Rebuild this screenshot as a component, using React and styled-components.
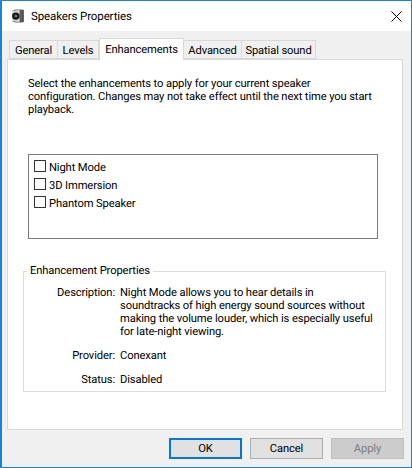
import styled, { createGlobalStyle } from "styled-components";

const Global = createGlobalStyle`
  html, body { margin: 0; padding: 0; background: #f0f0f0; }
  * { box-sizing: border-box; }
`;

const Window = styled.div`
  width: 412px;
  height: 468px;
  display: flex;
  flex-direction: column;
  background: #f0f0f0;
  border: 1px solid #1883d7;
  border-left-width: 2px;
  font-family: Roboto, "Noto Sans", sans-serif;
  font-size: 11.2px;
  letter-spacing: -0.12px;
  text-rendering: geometricPrecision;
  color: #000;
  overflow: hidden;
`;
const TitleBar = styled.div`
  height: 30px;
  flex: none;
  display: flex;
  align-items: center;
  background: #fff;
  padding-left: 9px;
  gap: 6px;
`;
const Title = styled.span`
  flex: 1;
  font-size: 11.5px;
`;
const CloseButton = styled.div`
  width: 30px;
  height: 30px;
  display: flex;
  align-items: center;
  justify-content: center;
`;
const Body = styled.div`
  flex: 1;
  display: flex;
  flex-direction: column;
  padding: 7px 8px 8px 5px;
`;
const TabRow = styled.div`
  height: 21px;
  flex: none;
  display: flex;
  align-items: flex-end;
  padding-left: 2px;
  position: relative;
  z-index: 1;
`;
const Tab = styled.div`
  width: ${(p) => p.$w}px;
  height: ${(p) => (p.$active ? 22 : 19)}px;
  margin-bottom: ${(p) => (p.$active ? -1 : 0)}px;
  display: flex;
  align-items: center;
  justify-content: center;
  background: ${(p) => (p.$active ? "#fff" : "#f0f0f0")};
  border: 1px solid #d9d9d9;
  border-bottom: ${(p) => (p.$active ? "none" : "1px solid #d9d9d9")};
  border-left: ${(p) => (p.$first || p.$active ? "1px solid #d9d9d9" : "none")};
  padding-top: ${(p) => (p.$active ? 0 : 2)}px;
  padding-bottom: ${(p) => (p.$active ? 1 : 0)}px;
`;
const Panel = styled.div`
  height: 371px;
  flex: none;
  background: #fff;
  border: 1px solid #d9d9d9;
  padding: 17px 17px 0 15px;
`;
const Intro = styled.p`
  margin: 0 0 0 5px;
  width: 350px;
  line-height: 13px;
`;
const ListBox = styled.div`
  margin: 38px 0 0 5px;
  width: 350px;
  height: 85px;
  border: 1px solid #7a7a7a;
  padding: 5px 5px;
  display: flex;
  flex-direction: column;
  gap: 6px;
`;
const CheckRow = styled.label`
  display: flex;
  align-items: center;
  gap: 3px;
  height: 12px;
  color: #000;
`;
const CheckText = styled.span`
  padding-top: 3px;
  line-height: 14px;
`;
const CheckBox = styled.span`
  width: 12px;
  height: 12px;
  flex: none;
  background: #fff;
  border: 1px solid #333;
`;
const GroupBox = styled.fieldset`
  margin: 25px 0 0 0;
  padding: 0;
  width: 363px;
  height: 128px;
  border: 1px solid #dcdcdc;
  display: flex;
  flex-direction: column;
  min-width: 0;
`;
const Legend = styled.legend`
  margin-left: 3px;
  padding: 0 3px;
  line-height: 14px;
`;
const PropRow = styled.div`
  display: grid;
  grid-template-columns: 91px 1fr;
  column-gap: 5px;
  margin-top: ${(p) => p.$gap}px;
  line-height: 13px;
`;
const PropLabel = styled.div`
  text-align: right;
`;
const PropValue = styled.div`
  width: 255px;
`;
const Footer = styled.div`
  display: flex;
  justify-content: flex-end;
  gap: 8px;
  margin-top: 8px;
  margin-right: -1px;
`;
const DialogButton = styled.div`
  width: 73px;
  height: 21px;
  display: flex;
  align-items: center;
  justify-content: center;
  background: ${(p) => (p.$disabled ? "#cccccc" : "#e1e1e1")};
  color: ${(p) => (p.$disabled ? "#7f7f7f" : "#000")};
  border: ${(p) => (p.$primary ? "2px solid #0078d7" : p.$disabled ? "1px solid #bfbfbf" : "1px solid #adadad")};
`;

const SpeakerIcon = () => (
  <svg width="14" height="15" viewBox="1 1.5 14 15">
    <path d="M2 3.5 L5 2 H13 L14 3 V14 L13 15 H5 L2 13.5 Z" fill="#6f6f6f" />
    <path d="M2 3.5 L9.5 2.5 V14.5 L2 13.5 Z" fill="#d8d8d8" />
    <circle cx="5.8" cy="8.6" r="3.7" fill="#111" />
    <circle cx="5.8" cy="8.6" r="1.5" fill="#777" />
    <path d="M10 2.5 H13.5 V14.5 H10 Z" fill="#585858" />
  </svg>
);

const CloseIcon = () => (
  <svg width="11" height="11" viewBox="0 0 11 11">
    <path d="M0.5 0.5 L10.5 10.5 M10.5 0.5 L0.5 10.5" stroke="#000" strokeWidth="1" fill="none" />
  </svg>
);

const tabs = [
  { name: "General", w: 49, first: true },
  { name: "Levels", w: 41 },
  { name: "Enhancements", w: 85, active: true },
  { name: "Advanced", w: 58 },
  { name: "Spatial sound", w: 74 },
];

const effects = ["Night Mode", "3D Immersion", "Phantom Speaker"];

const App = () => {
  return (
    <Window>
      <Global />
      <TitleBar>
        <SpeakerIcon />
        <Title>Speakers Properties</Title>
        <CloseButton>
          <CloseIcon />
        </CloseButton>
      </TitleBar>
      <Body>
        <TabRow>
          {tabs.map((t) => (
            <Tab key={t.name} $w={t.w} $first={t.first} $active={t.active}>
              {t.name}
            </Tab>
          ))}
        </TabRow>
        <Panel>
          <Intro>
            Select the enhancements to apply for your current speaker configuration. Changes may
            not take effect until the next time you start playback.
          </Intro>
          <ListBox>
            {effects.map((e) => (
              <CheckRow key={e}>
                <CheckBox />
                <CheckText>{e}</CheckText>
              </CheckRow>
            ))}
          </ListBox>
          <GroupBox>
            <Legend>Enhancement Properties</Legend>
            <PropRow $gap={8}>
              <PropLabel>Description:</PropLabel>
              <PropValue>
                Night Mode allows you to hear details in soundtracks of high energy sound sources
                without making the volume louder, which is especially useful for late-night
                viewing.
              </PropValue>
            </PropRow>
            <PropRow $gap={11}>
              <PropLabel>Provider:</PropLabel>
              <PropValue>Conexant</PropValue>
            </PropRow>
            <PropRow $gap={11}>
              <PropLabel>Status:</PropLabel>
              <PropValue>Disabled</PropValue>
            </PropRow>
          </GroupBox>
        </Panel>
        <Footer>
          <DialogButton $primary>OK</DialogButton>
          <DialogButton>Cancel</DialogButton>
          <DialogButton $disabled>Apply</DialogButton>
        </Footer>
      </Body>
    </Window>
  );
};

export default App;
